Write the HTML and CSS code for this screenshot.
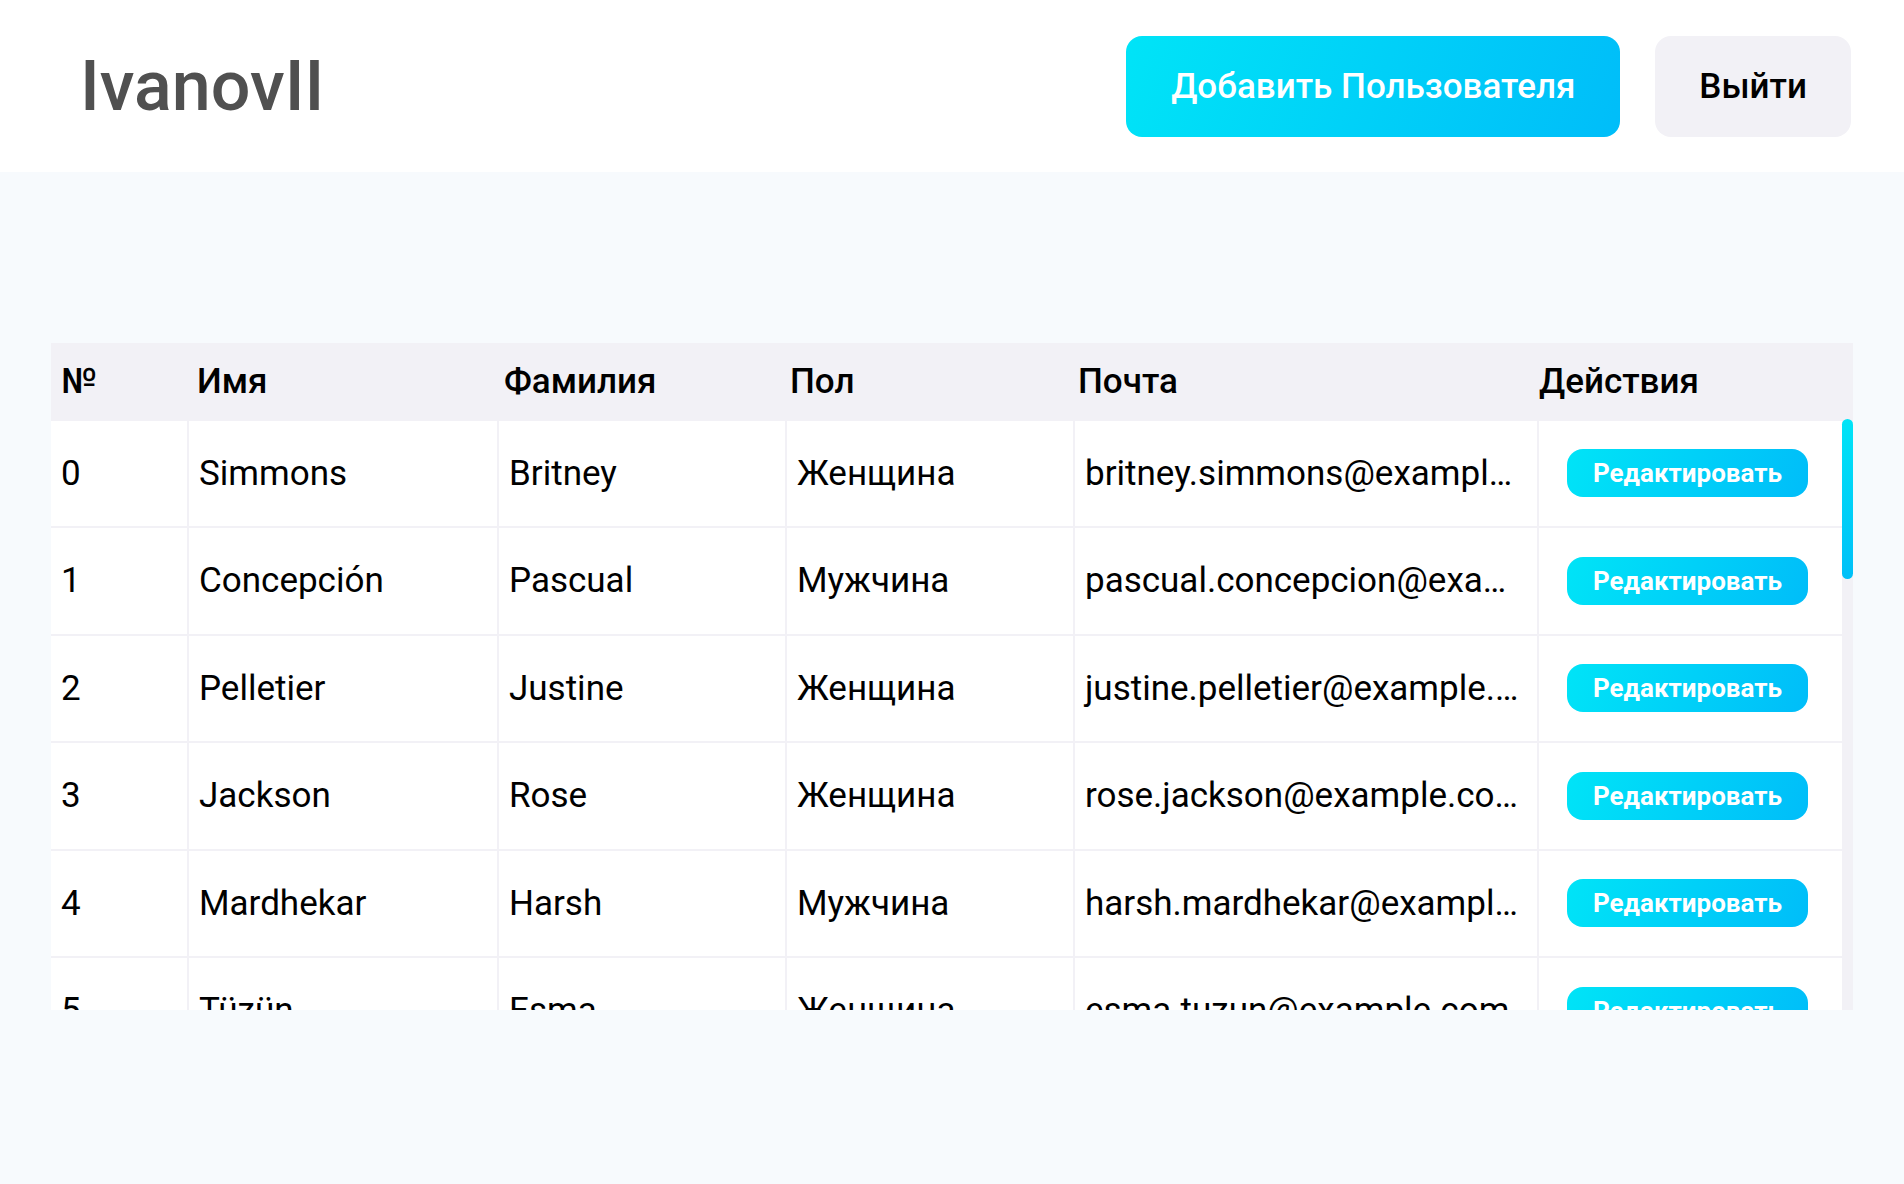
FILE: index.html
```html
<!DOCTYPE html>
<html lang="ru">
<head>
<meta charset="utf-8">
<title>Пользователи</title>
<link rel="stylesheet" href="styles.css">
</head>
<body>
<header class="topbar">
  <h1 class="brand">IvanovII</h1>
  <div class="actions">
    <button class="btn-add">Добавить Пользователя</button>
    <button class="btn-logout">Выйти</button>
  </div>
</header>
<main class="content">
  <div class="table">
    <div class="thead">
      <div class="th">№</div>
      <div class="th">Имя</div>
      <div class="th">Фамилия</div>
      <div class="th">Пол</div>
      <div class="th">Почта</div>
      <div class="th">Действия</div>
    </div>
    <div class="tbody-wrap">
      <div class="tbody">
        <div class="tr">
          <div class="td">0</div><div class="td">Simmons</div><div class="td">Britney</div><div class="td">Женщина</div><div class="td td-mail">britney.simmons@example.com</div>
          <div class="td td-action"><button class="btn-edit">Редактировать</button></div>
        </div>
        <div class="tr">
          <div class="td">1</div><div class="td">Concepción</div><div class="td">Pascual</div><div class="td">Мужчина</div><div class="td td-mail">pascual.concepcion@example.com</div>
          <div class="td td-action"><button class="btn-edit">Редактировать</button></div>
        </div>
        <div class="tr">
          <div class="td">2</div><div class="td">Pelletier</div><div class="td">Justine</div><div class="td">Женщина</div><div class="td td-mail">justine.pelletier@example.com</div>
          <div class="td td-action"><button class="btn-edit">Редактировать</button></div>
        </div>
        <div class="tr">
          <div class="td">3</div><div class="td">Jackson</div><div class="td">Rose</div><div class="td">Женщина</div><div class="td td-mail">rose.jackson@example.com</div>
          <div class="td td-action"><button class="btn-edit">Редактировать</button></div>
        </div>
        <div class="tr">
          <div class="td">4</div><div class="td">Mardhekar</div><div class="td">Harsh</div><div class="td">Мужчина</div><div class="td td-mail">harsh.mardhekar@example.com</div>
          <div class="td td-action"><button class="btn-edit">Редактировать</button></div>
        </div>
        <div class="tr">
          <div class="td">5</div><div class="td">Tüzün</div><div class="td">Esma</div><div class="td">Женщина</div><div class="td td-mail">esma.tuzun@example.com</div>
          <div class="td td-action"><button class="btn-edit">Редактировать</button></div>
        </div>
      </div>
      <div class="scrollbar"><div class="thumb"></div></div>
    </div>
  </div>
</main>
</body>
</html>
```

FILE: styles.css
```css
html, body {
  margin: 0;
  padding: 0;
  min-height: 100%;
}
body {
  background: #f7fafd;
  font-family: Roboto, "Noto Sans", sans-serif;
  color: #000;
  min-height: 1184px;
}
.topbar {
  height: 172px;
  background: #ffffff;
  display: flex;
  align-items: center;
  justify-content: space-between;
  padding: 0 53px 0 80px;
  box-sizing: border-box;
}
.brand {
  margin: 0;
  font-size: 70px;
  font-weight: 500;
  line-height: 1;
  color: #505050;
}
.actions {
  display: flex;
  gap: 35px;
}
.actions button {
  height: 101px;
  border: none;
  border-radius: 16px;
  font-family: Roboto, "Noto Sans", sans-serif;
  font-size: 35px;
  font-weight: 500;
  cursor: pointer;
}
.btn-add {
  padding: 0 45px;
  color: #fff;
  background: linear-gradient(110deg, #00e4f7 0%, #00bdf9 100%);
}
.btn-logout {
  padding: 0 44px;
  color: #000;
  background: #f2f1f6;
}
.content {
  padding: 171px 51px 0;
}
.table {
  width: 1802px;
}
.thead {
  display: grid;
  grid-template-columns: 136px 307px 286px 288px 461px 1fr;
  height: 76px;
  background: #f2f1f6;
  align-items: center;
}
.th {
  padding-left: 10px;
  font-size: 35px;
  font-weight: 500;
  white-space: nowrap;
}
.tbody-wrap {
  display: flex;
  height: 591px;
  overflow: hidden;
}
.tbody {
  flex: 1;
  display: flex;
  flex-direction: column;
  gap: 2px;
  background: #f2f1f6;
  padding-top: 1.5px;
}
.tr {
  display: grid;
  grid-template-columns: 136px 308px 286px 286px 462px 1fr;
  column-gap: 2px;
  flex: 0 0 105.5px;
}
.td {
  background: #fff;
  padding: 0 10px;
  font-size: 35px;
  line-height: 105.5px;
  white-space: nowrap;
  overflow: hidden;
  text-overflow: ellipsis;
}
.td-mail {
  padding-right: 15px;
}
.td-action {
  display: flex;
  align-items: center;
  justify-content: center;
  padding: 0 6px 0 0;
}
.btn-edit {
  height: 48px;
  padding: 0 26px;
  border: none;
  border-radius: 16px;
  color: #fff;
  font-family: Roboto, "Noto Sans", sans-serif;
  font-size: 26px;
  font-weight: 700;
  background: linear-gradient(110deg, #00e4f7 0%, #00bdf9 100%);
  cursor: pointer;
}
.scrollbar {
  width: 11px;
  flex: 0 0 11px;
  background: #f2f1f6;
}
.thumb {
  height: 160px;
  border-radius: 6px;
  background: linear-gradient(180deg, #00e4f7 0%, #00c0f8 100%);
}
```
